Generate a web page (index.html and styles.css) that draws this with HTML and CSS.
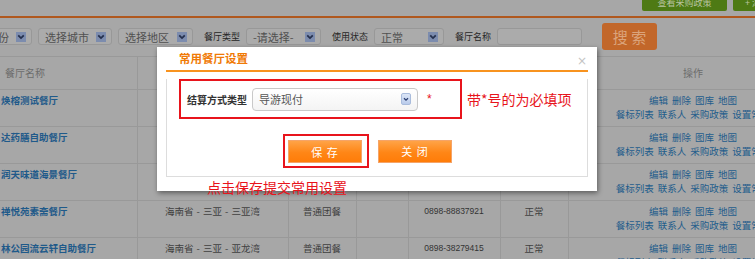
FILE: index.html
```html
<!DOCTYPE html>
<html lang="zh-CN">
<head>
  <meta charset="UTF-8" />
  <title>常用餐厅设置</title>
  <link rel="stylesheet" href="styles.css">
</head>
<body>
  <div class="topbar">
    <a class="btn-green">查看采购政策</a>
    <a class="btn-green btn-add">+ 添加餐厅</a>
  </div>

  <div class="filters">
    <div class="sel w74"><span>选择省份</span><span class="arr"><svg viewBox="0 0 9 9"><path d="M2 3l2.5 2.5L7 3"/></svg></span></div>
    <div class="sel w74"><span>选择城市</span><span class="arr"><svg viewBox="0 0 9 9"><path d="M2 3l2.5 2.5L7 3"/></svg></span></div>
    <div class="sel w75"><span>选择地区</span><span class="arr"><svg viewBox="0 0 9 9"><path d="M2 3l2.5 2.5L7 3"/></svg></span></div>
    <label class="lbl">餐厅类型</label>
    <div class="sel w75"><span>-请选择-</span><span class="arr"><svg viewBox="0 0 9 9"><path d="M2 3l2.5 2.5L7 3"/></svg></span></div>
    <label class="lbl">使用状态</label>
    <div class="sel w70"><span>正常</span><span class="arr"><svg viewBox="0 0 9 9"><path d="M2 3l2.5 2.5L7 3"/></svg></span></div>
    <label class="lbl">餐厅名称</label>
    <div class="txt-input"></div>
    <button class="btn-search">搜 索</button>
  </div>

  <table class="list">
    <colgroup>
      <col style="width:137px"><col style="width:151px"><col style="width:68px"><col style="width:52px">
      <col style="width:92px"><col style="width:68px"><col style="width:250px">
    </colgroup>
    <tr class="head">
      <th class="first">餐厅名称</th><th></th><th></th><th></th><th></th><th></th><th>操作</th>
    </tr>
    <tr>
      <td class="name">焕榕测试餐厅</td><td class="area">海南省 - 三亚 - 三亚湾</td><td>普通团餐</td><td></td><td class="phone">0898-88888888</td><td>正常</td>
      <td class="ops"><a>编辑</a><a>删除</a><a>图库</a><a>地图</a><br><a>餐标列表</a><a>联系人</a><a>采购政策</a><a>设置常用</a></td>
    </tr>
    <tr>
      <td class="name">达药膳自助餐厅</td><td class="area">海南省 - 三亚 - 三亚湾</td><td>普通团餐</td><td></td><td class="phone">0898-88888888</td><td>正常</td>
      <td class="ops"><a>编辑</a><a>删除</a><a>图库</a><a>地图</a><br><a>餐标列表</a><a>联系人</a><a>采购政策</a><a>设置常用</a></td>
    </tr>
    <tr>
      <td class="name">润天味道海景餐厅</td><td class="area">海南省 - 三亚 - 三亚湾</td><td>普通团餐</td><td></td><td class="phone">0898-88888888</td><td>正常</td>
      <td class="ops"><a>编辑</a><a>删除</a><a>图库</a><a>地图</a><br><a>餐标列表</a><a>联系人</a><a>采购政策</a><a>设置常用</a></td>
    </tr>
    <tr>
      <td class="name">禅悦苑素斋餐厅</td><td class="area">海南省 - 三亚 - 三亚湾</td><td>普通团餐</td><td></td><td class="phone">0898-88837921</td><td>正常</td>
      <td class="ops"><a>编辑</a><a>删除</a><a>图库</a><a>地图</a><br><a>餐标列表</a><a>联系人</a><a>采购政策</a><a>设置常用</a></td>
    </tr>
    <tr>
      <td class="name">林公园流云轩自助餐厅</td><td class="area">海南省 - 三亚 - 亚龙湾</td><td>普通团餐</td><td></td><td class="phone">0898-38279415</td><td>正常</td>
      <td class="ops"><a>编辑</a><a>删除</a><a>图库</a><a>地图</a><br><a>餐标列表</a><a>联系人</a><a>采购政策</a><a>设置常用</a></td>
    </tr>
  </table>

  <div class="dialog">
    <div class="dlg-head">
      <span class="dlg-title">常用餐厅设置</span>
      <span class="dlg-close">×</span>
    </div>
    <div class="dlg-body">
      <div class="req-row">
        <div class="req-box">
          <span class="dlg-label">结算方式类型</span>
          <div class="dlg-select">
            <span>导游现付</span>
            <span class="dlg-arr"><svg viewBox="0 0 10 12"><path d="M2.5 5l2.5 2.5L7.5 5"/></svg></span>
          </div>
          <span class="star">*</span>
        </div>
        <span class="note">带*号的为必填项</span>
      </div>
      <div class="btn-row">
        <div class="save-mark"><button class="btn-orange">保 存</button></div>
        <button class="btn-orange btn-close">关 闭</button>
      </div>
    </div>
    <div class="note note2">点击保存提交常用设置</div>
  </div>
</body>
</html>
```

FILE: styles.css
```css
*, *::before, *::after {
  box-sizing: border-box;
}

body {
  margin: 0;
  width: 755px;
  height: 259px;
  overflow: hidden;
  position: relative;
  background-color: #a7a7a7;
  font-family: "Noto Sans CJK SC", sans-serif;
  color: #404040;
}

/* top strip */
.topbar {
  width: 790px;
  height: 18px;
  border-bottom: 2px solid #b0581e;
  display: flex;
  justify-content: flex-end;
  align-items: flex-start;
  gap: 6px;
}

.btn-green {
  width: 85px;
  height: 11px;
  background-color: #4e7a14;
  color: #b9c4a0;
  font-size: 9px;
  line-height: 6px;
  text-align: center;
  overflow: hidden;
  border-radius: 0 0 2px 2px;
}

.btn-add {
  width: 57px;
  text-align: left;
  padding-left: 12px;
}

/* filter row */
.filters {
  display: flex;
  align-items: center;
  gap: 6px;
  height: 27px;
  margin: 5px 0 0 -42px;
}

.sel {
  height: 17px;
  border: 1px solid #989898;
  border-radius: 3px;
  background-color: #ababab;
  display: flex;
  align-items: center;
  justify-content: space-between;
  padding: 0 5px 0 6px;
  font-size: 11px;
  color: #505050;
  flex-shrink: 0;
}

.w70 { width: 70px; }
.w74 { width: 74px; }
.w75 { width: 75px; }

.arr {
  width: 10px;
  height: 10px;
  background-color: #7c8cae;
  display: flex;
}

.arr svg {
  width: 10px;
  height: 10px;
  fill: none;
  stroke: #25304d;
  stroke-width: 1.6;
}

.lbl {
  margin-left: 5px;
  font-size: 9px;
  color: #262626;
  white-space: nowrap;
}

.txt-input {
  width: 85px;
  height: 17px;
  border: 1px solid #989898;
  border-radius: 3px;
  background-color: #ababab;
  flex-shrink: 0;
}

.btn-search {
  margin-left: 14px;
  width: 55px;
  height: 27px;
  border: none;
  border-radius: 3px;
  background-color: #c2672a;
  color: #dba47c;
  font-family: inherit;
  font-size: 15px;
  padding: 0;
  flex-shrink: 0;
}

/* list */
.list {
  margin-top: 6px;
  width: 818px;
  table-layout: fixed;
  border-collapse: collapse;
  font-size: 9.5px;
}

.list th,
.list td {
  border: 1px solid #999;
  border-top: none;
  text-align: center;
  vertical-align: top;
  padding: 3px 0 0;
  line-height: 14px;
  height: 37px;
  white-space: nowrap;
  overflow: hidden;
}

.list tr.head th {
  height: 33px;
  border-top: 1px solid #999;
  vertical-align: middle;
  padding: 0;
  font-weight: normal;
  font-size: 10px;
  color: #6c6c6c;
}

.list tr.head th.first {
  text-align: left;
  padding-left: 5px;
}

.list td:first-child,
.list th:first-child {
  border-left: none;
}

.list td.name {
  text-align: left;
  padding-left: 1px;
  font-weight: bold;
  color: #1f5a8a;
}

.list td.area {
  word-spacing: 1px;
}

.list td.phone {
  font-family: "Liberation Sans", sans-serif;
  font-size: 8.5px;
  color: #333;
}

.ops a {
  color: #1f5d8c;
  margin: 0 2px;
}

/* dialog */
.dialog {
  position: absolute;
  left: 157px;
  top: 47px;
  width: 440px;
  height: 144px;
  padding: 0 9px;
  background-color: #fff;
  box-shadow: 1px 2px 5px rgba(0, 0, 0, 0.45);
}

.dlg-head {
  height: 25px;
  border-bottom: 2px solid #f8931f;
  display: flex;
  justify-content: space-between;
  align-items: flex-start;
}

.dlg-title {
  padding-left: 13px;
  line-height: 23px;
  font-size: 11.5px;
  font-weight: bold;
  color: #f07a06;
}

.dlg-close {
  margin: 8px 1px 0 0;
  font-size: 12px;
  line-height: 12px;
  color: #c4c4c4;
  font-family: "DejaVu Sans", sans-serif;
}

.dlg-body {
  height: 98px;
  border: 1px solid #ddd;
  border-top: none;
}

.req-row {
  display: flex;
  align-items: center;
  margin: 7px 0 0 12px;
}

.req-box {
  width: 283px;
  height: 40px;
  border: 2px solid #e8141c;
  display: flex;
  align-items: center;
  padding-left: 6px;
}

.dlg-label {
  width: 65px;
  font-size: 10px;
  font-weight: bold;
  color: #333;
}

.dlg-select {
  width: 166px;
  height: 23px;
  border: 1px solid #c9c9c9;
  border-radius: 4px;
  background: linear-gradient(#ffffff, #f4f4f4);
  display: flex;
  align-items: center;
  justify-content: space-between;
  padding: 0 6px 0 6px;
  font-size: 11px;
  color: #555;
}

.dlg-arr {
  width: 10px;
  height: 12px;
  display: flex;
  background: linear-gradient(#dce6f7, #b9cbeb);
  border: 1px solid #a9bcdc;
  border-radius: 2px;
}

.dlg-arr svg {
  width: 8px;
  height: 10px;
  fill: none;
  stroke: #2c3f70;
  stroke-width: 1.6;
}

.star {
  margin-left: 9px;
  color: #e8141c;
  font-size: 12px;
  font-family: "Liberation Sans", sans-serif;
}

.note {
  margin-left: 5px;
  font-size: 14px;
  color: #e8141c;
  white-space: nowrap;
}

.btn-row {
  display: flex;
  align-items: center;
  margin: 15px 0 0 116px;
}

.save-mark {
  border: 2px solid #e8141c;
  padding: 4px 5px 3px 3px;
}

.btn-orange {
  display: block;
  width: 74px;
  height: 23px;
  padding: 0;
  border: 1px solid #f5a468;
  background: linear-gradient(#ffa347, #ff8616 55%, #ff7c08);
  color: #fff;
  font-family: inherit;
  font-size: 11px;
  letter-spacing: 1px;
}

.btn-close {
  margin-left: 9px;
}

.note2 {
  margin: 2px 0 0 41px;
  line-height: 16px;
}
```
